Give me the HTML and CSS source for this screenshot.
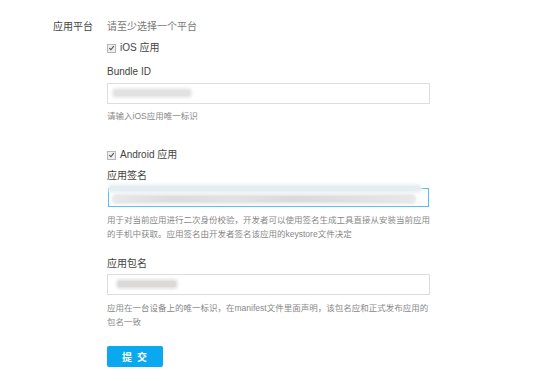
FILE: index.html
```html
<!DOCTYPE html>
<html lang="zh-CN">
<head>
  <meta charset="UTF-8" />
  <title>应用平台</title>
  <link rel="stylesheet" href="styles.css">
</head>
<body>
  <form class="app-form" autocomplete="off">
    <div class="row">
      <label class="row-label">应用平台</label>
      <div class="row-body">
        <div class="tip">请至少选择一个平台</div>

        <div class="check"><span class="box"><svg viewBox="0 0 8 8" width="8" height="8"><path d="M1.5 4.2 L3.3 6 L6.6 1.8" fill="none" stroke="#555" stroke-width="1.3"/></svg></span>iOS 应用</div>
        <div class="field-label">Bundle ID</div>
        <div class="input"><span class="smudge s-ios"></span></div>
        <div class="hint">请输入iOS应用唯一标识</div>

        <div class="check check-android"><span class="box"><svg viewBox="0 0 8 8" width="8" height="8"><path d="M1.5 4.2 L3.3 6 L6.6 1.8" fill="none" stroke="#555" stroke-width="1.3"/></svg></span>Android 应用</div>
        <div class="field-label">应用签名</div>
        <div class="input input-sign"><span class="smudge s-sign-top"></span><span class="smudge s-sign"></span></div>
        <div class="hint">用于对当前应用进行二次身份校验，开发者可以使用签名生成工具直接从安装当前应用的手机中获取。应用签名由开发者签名该应用的keystore文件决定</div>

        <div class="field-label label-pkg">应用包名</div>
        <div class="input input-pkg"><span class="smudge s-pkg"></span></div>
        <div class="hint">应用在一台设备上的唯一标识，在manifest文件里面声明，该包名应和正式发布应用的包名一致</div>

        <button type="button" class="btn-submit">提 交</button>
      </div>
    </div>
  </form>
</body>
</html>
```

FILE: styles.css
```css
body {
  margin: 0;
  background: #fff;
  color: #444;
  font-family: "Liberation Sans", "Noto Sans CJK SC", sans-serif;
  font-size: 10px;
}
.app-form {
  padding-top: 19px;
}
.row {
  display: grid;
  grid-template-columns: 93px 323px;
  column-gap: 14px;
}
.row-label {
  text-align: right;
  line-height: 16px;
  color: #444;
}
.tip {
  line-height: 16px;
  color: #777;
}
.check {
  display: flex;
  align-items: center;
  gap: 4px;
  line-height: 16px;
  margin-top: 5px;
}
.check-android {
  margin-top: 24px;
}
.box {
  width: 7px;
  height: 7px;
  border: 1px solid #b5b5b5;
  background: #eee;
  display: flex;
  align-items: center;
  justify-content: center;
}
.field-label {
  line-height: 16px;
  margin-top: 8px;
}
.check-android + .field-label {
  margin-top: 5px;
}
.label-pkg {
  margin-top: 15px;
}
.input {
  position: relative;
  height: 19px;
  border: 1px solid #ddd;
  margin-top: 3px;
}
.input-sign {
  border-color: transparent;
  box-shadow: inset 0 0 0 1px #55bdf0;
}
.input-pkg {
  margin-top: 2px;
}
.hint {
  margin-top: 5px;
  font-size: 8.5px;
  line-height: 14px;
  color: #888;
}
.input-pkg + .hint {
  margin-top: 6px;
}

/* blurred placeholder values */
.smudge {
  position: absolute;
  border-radius: 2px;
}
.s-ios {
  left: 6px;
  top: 6px;
  width: 76px;
  height: 6px;
  background: #e2e2e2;
  box-shadow: 0 0 3px 2px #e8e8e8;
}
.s-sign {
  left: 6px;
  top: 8px;
  width: 300px;
  height: 6px;
  background: linear-gradient(90deg, #e6e8ea, #dcdcdc 20%, #e2e2e2 40%, #d9dadc 60%, #e0e0e0 80%, #e8e8e8);
  box-shadow: 0 0 3px 2px #e6e6e6;
}
.s-sign-top {
  left: 2px;
  top: -2px;
  width: 310px;
  height: 5px;
  background: #e4edf2;
  box-shadow: 0 0 3px 2px #e9f1f5;
}
.s-pkg {
  left: 10px;
  top: 6px;
  width: 58px;
  height: 6px;
  background: #dcd9d9;
  box-shadow: 0 0 3px 2px #e4e2e2;
}

.btn-submit {
  display: block;
  margin-top: 17px;
  width: 56px;
  height: 21px;
  border: none;
  border-radius: 2px;
  background: #0aa8ee;
  color: #fff;
  font-family: "Liberation Sans", "Noto Sans CJK SC", sans-serif;
  font-size: 10px;
  font-weight: bold;
  letter-spacing: 1px;
  padding: 0;
  cursor: pointer;
}
```
